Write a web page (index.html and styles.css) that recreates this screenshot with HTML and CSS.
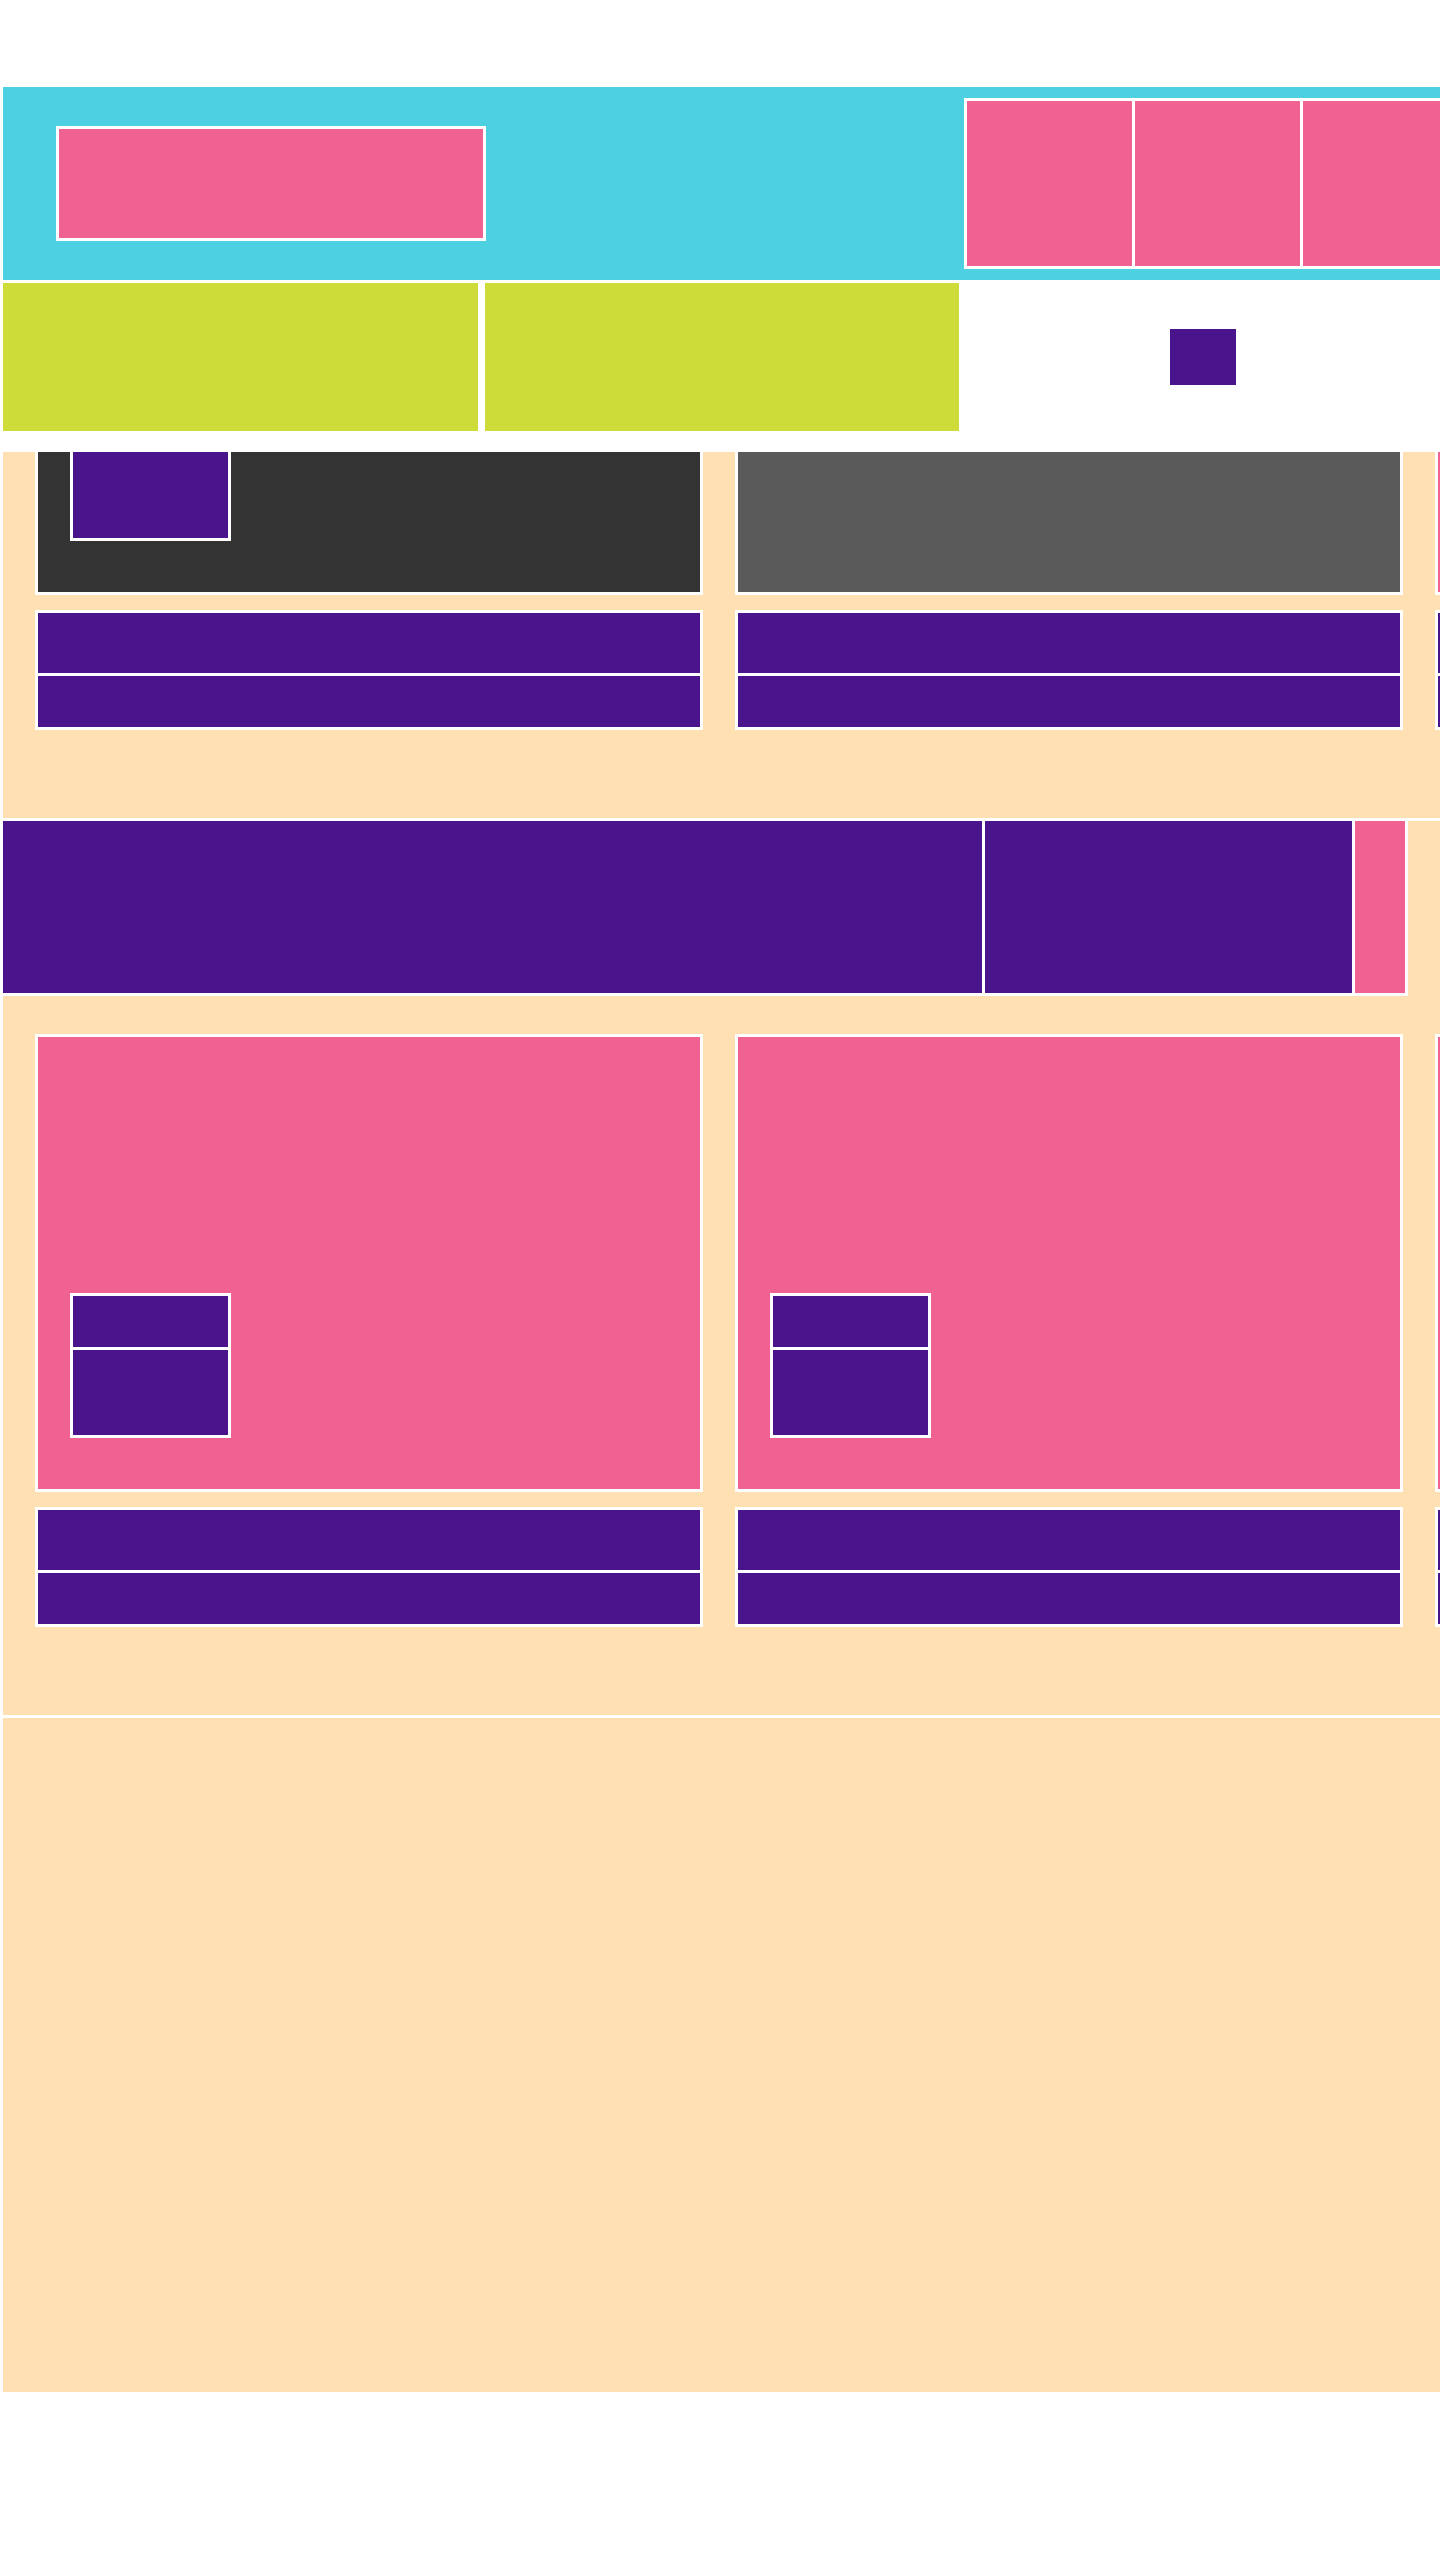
FILE: index.html
```html
<!DOCTYPE html>
<html lang="en">
<head>
<meta charset="utf-8">
<title>Layout</title>
<link rel="stylesheet" href="styles.css">
</head>
<body>
<div class="page">
  <header class="top">
    <div class="logo"></div>
    <div class="tiles">
      <div class="tile"></div>
      <div class="tile"></div>
      <div class="tile"></div>
    </div>
  </header>

  <nav class="bar">
    <div class="lime lime-a"></div>
    <div class="lime lime-b"></div>
    <div class="bar-end"><div class="chip"></div></div>
  </nav>

  <section class="band band-1">
    <div class="cols">
      <div class="col">
        <div class="card card-dark">
          <div class="stack"><div class="blk blk-tall"></div></div>
        </div>
        <div class="list"><div class="row row-a"></div><div class="row row-b"></div></div>
      </div>
      <div class="col">
        <div class="card card-gray"></div>
        <div class="list"><div class="row row-a"></div><div class="row row-b"></div></div>
      </div>
      <div class="col">
        <div class="card card-pink"></div>
        <div class="list"><div class="row row-a"></div><div class="row row-b"></div></div>
      </div>
    </div>
  </section>

  <div class="strip-wrap">
    <div class="strip">
      <div class="seg seg-wide"></div>
      <div class="seg seg-mid"></div>
      <div class="seg seg-pink"></div>
    </div>
  </div>

  <section class="band band-2">
    <div class="cols">
      <div class="col">
        <div class="card card-pink">
          <div class="stack"><div class="blk blk-s"></div><div class="blk blk-m"></div></div>
        </div>
        <div class="list"><div class="row row-a"></div><div class="row row-b"></div></div>
      </div>
      <div class="col">
        <div class="card card-pink">
          <div class="stack"><div class="blk blk-s"></div><div class="blk blk-m"></div></div>
        </div>
        <div class="list"><div class="row row-a"></div><div class="row row-b"></div></div>
      </div>
      <div class="col">
        <div class="card card-pink">
          <div class="stack"><div class="blk blk-s"></div><div class="blk blk-m"></div></div>
        </div>
        <div class="list"><div class="row row-a"></div><div class="row row-b"></div></div>
      </div>
    </div>
  </section>

  <section class="band band-3"></section>
</div>
</body>
</html>
```

FILE: styles.css
```css
html, body {
  margin: 0;
  padding: 0;
  background: #ffffff;
  overflow: hidden;
  font-family: "Liberation Sans", Arial, sans-serif;
}

.page {
  padding: 87px 0 0 3px;
}

/* header */
.top {
  display: flex;
  align-items: center;
  height: 193px;
  padding-left: 53px;
  background: #4dd0e1;
  overflow: hidden;
}
.logo {
  flex: 0 0 auto;
  width: 424px;
  height: 109px;
  border: 3px solid #ffffff;
  background: #f06292;
}
.tiles {
  flex: 0 0 auto;
  display: flex;
  gap: 3px;
  margin-left: 478px;
  padding: 3px;
  background: #ffffff;
}
.tile {
  flex: 0 0 auto;
  width: 165px;
  height: 165px;
  background: #f06292;
}

/* nav bar */
.bar {
  display: flex;
  height: 148px;
  margin-top: 3px;
}
.lime {
  flex: 0 0 auto;
  background: #cddc39;
}
.lime-a { width: 475px; }
.lime-b { width: 474px; margin-left: 7px; }
.bar-end {
  flex: 1 1 auto;
  display: flex;
  align-items: center;
  padding-left: 211px;
}
.chip {
  width: 66px;
  height: 56px;
  background: #4a148c;
}

/* bands */
.band {
  background: #ffe0b2;
  overflow: hidden;
}
.band-1 {
  margin-top: 21px;
  padding-bottom: 88px;
}
.band-1 .cols {
  margin-top: -315px;
}
.band-2 {
  padding-top: 38px;
  padding-bottom: 88px;
  border-bottom: 3px solid #ffffff;
}
.band-3 {
  height: 674px;
}

.cols {
  display: flex;
  gap: 32px;
  padding-left: 32px;
}
.col {
  flex: 0 0 auto;
  width: 668px;
  display: flex;
  flex-direction: column;
  gap: 15px;
}

.card {
  box-sizing: border-box;
  height: 458px;
  border: 3px solid #ffffff;
  display: flex;
  flex-direction: column;
  justify-content: flex-end;
  align-items: flex-start;
  padding: 0 0 51px 32px;
}
.card-dark { background: #333333; }
.card-gray { background: #5a5a5a; }
.card-pink { background: #f06292; }

.stack {
  display: flex;
  flex-direction: column;
  gap: 3px;
  width: 155px;
  padding: 3px;
  background: #ffffff;
}
.blk { background: #4a148c; }
.blk-tall { height: 139px; }
.blk-s { height: 51px; }
.blk-m { height: 85px; }

.list {
  display: flex;
  flex-direction: column;
  gap: 3px;
  padding: 3px;
  background: #ffffff;
}
.row { background: #4a148c; }
.row-a { height: 60px; }
.row-b { height: 51px; }

/* strip */
.strip-wrap {
  background: #ffe0b2;
  border-top: 3px solid #ffffff;
}
.strip {
  display: flex;
  gap: 3px;
  width: 1402px;
  padding: 0 3px 3px 0;
  background: #ffffff;
}
.seg {
  flex: 0 0 auto;
  height: 172px;
}
.seg-wide { width: 979px; background: #4a148c; }
.seg-mid { width: 367px; background: #4a148c; }
.seg-pink { width: 50px; background: #f06292; }
```
